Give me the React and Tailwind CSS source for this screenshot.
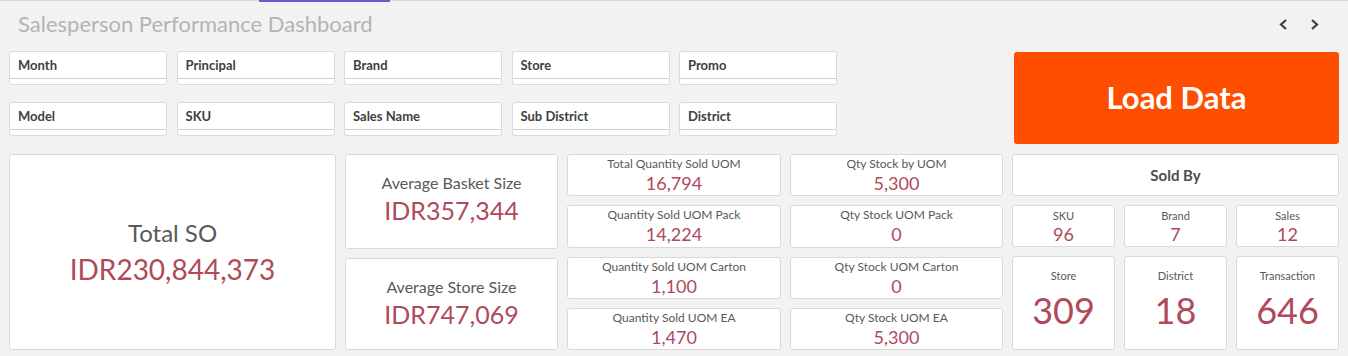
import React from "react";

const FILTERS = [
  ["Month", "Principal", "Brand", "Store", "Promo"],
  ["Model", "SKU", "Sales Name", "Sub District", "District"],
];

const SOLD = [
  ["Total Quantity Sold UOM", "16,794"],
  ["Quantity Sold UOM Pack", "14,224"],
  ["Quantity Sold UOM Carton", "1,100"],
  ["Quantity Sold UOM EA", "1,470"],
];

const STOCK = [
  ["Qty Stock by UOM", "5,300"],
  ["Qty Stock UOM Pack", "0"],
  ["Qty Stock UOM Carton", "0"],
  ["Qty Stock UOM EA", "5,300"],
];

const Card = ({ className = "", children }) => (
  <div
    className={`bg-white border border-[#d9d9d9] rounded-[3px] flex flex-col items-center ${className}`}
  >
    {children}
  </div>
);

const FilterBox = ({ label }) => (
  <div className="h-[34px] bg-white border border-[#dadada] rounded-[3px] flex flex-col">
    <div className="h-[27px] border-b border-[#d2d2d2] flex items-center pl-2 pt-[2px] text-[13px] font-bold text-[#404040]">
      {label}
    </div>
  </div>
);

const Chevron = ({ dir }) => (
  <svg width="9" height="11" viewBox="0 0 9 11" className="text-[#404040]">
    <polyline
      points={dir === "left" ? "7,1 2,5.5 7,10" : "2,1 7,5.5 2,10"}
      fill="none"
      stroke="currentColor"
      strokeWidth="2.2"
    />
  </svg>
);

export default function App() {
  return (
    <div
      className="w-[1348px] h-[356px] bg-[#f2f2f2] overflow-hidden"
      style={{ fontFamily: "Lato, 'Open Sans', sans-serif" }}
    >
      {/* tab strip line */}
      <div className="h-px bg-[#d6d6d6] relative">
        <span className="absolute left-[259px] top-0 w-[131px] h-[2px] bg-[#6a5acd]" />
      </div>

      {/* title */}
      <div className="h-[50px] flex items-center justify-between pl-[18px] pr-[29px] pb-[6px]">
        <h1 className="text-[22px] text-[#b4b4b4]">Salesperson Performance Dashboard</h1>
        <div className="flex items-center gap-[22px] pt-[2px]">
          <Chevron dir="left" />
          <Chevron dir="right" />
        </div>
      </div>

      {/* filters + button */}
      <div className="flex items-start px-[9px]">
        <div className="w-[828px] grid grid-cols-5 gap-x-[9.5px] gap-y-[17px]">
          {FILTERS.flat().map((f) => (
            <FilterBox key={f} label={f} />
          ))}
        </div>
        <button className="ml-auto mt-px w-[325px] h-[92px] rounded-[3px] bg-[#ff4e00] text-white text-[31px] font-bold pb-[2px]">
          Load Data
        </button>
      </div>

      {/* KPI grid */}
      <div className="mt-[10px] px-[9px] h-[196px] grid grid-cols-[327px_213px_214px_213px_1fr] gap-x-[9px]">
        <Card className="justify-center pt-[2px]">
          <div className="text-[24px] text-[#595959] leading-[32px]">Total SO</div>
          <div className="text-[28px] text-[#b04a5a] leading-[40px]">IDR230,844,373</div>
        </Card>

        <div className="flex flex-col gap-[9px]">
          <Card className="flex-1 justify-center pb-[4px]">
            <div className="text-[16px] text-[#595959] leading-[22px]">Average Basket Size</div>
            <div className="text-[25px] text-[#b04a5a] leading-[32px]">IDR357,344</div>
          </Card>
          <Card className="flex-1 justify-center pb-[2px]">
            <div className="text-[16px] text-[#595959] leading-[22px]">Average Store Size</div>
            <div className="text-[25px] text-[#b04a5a] leading-[32px]">IDR747,069</div>
          </Card>
        </div>

        {[SOLD, STOCK].map((col, i) => (
          <div key={i} className="grid grid-rows-4 gap-[9px]">
            {col.map(([label, value]) => (
              <Card key={label} className="pt-[1px]">
                <div className="text-[12px] text-[#595959] leading-[16px]">{label}</div>
                <div className="text-[18px] text-[#b04a5a] leading-[22px]">{value}</div>
              </Card>
            ))}
          </div>
        ))}

        <div className="flex flex-col gap-[9px]">
          <Card className="h-[42px] justify-center">
            <div className="text-[15px] font-bold text-[#4d4d4d]">Sold By</div>
          </Card>
          <div className="h-[42px] grid grid-cols-3 gap-[9px]">
            {[
              ["SKU", "96"],
              ["Brand", "7"],
              ["Sales", "12"],
            ].map(([label, value]) => (
              <Card key={label} className="pt-[2px]">
                <div className="text-[11px] text-[#595959] leading-[15px]">{label}</div>
                <div className="text-[18px] text-[#b04a5a] leading-[22px]">{value}</div>
              </Card>
            ))}
          </div>
          <div className="flex-1 grid grid-cols-3 gap-[9px]">
            {[
              ["Store", "309"],
              ["District", "18"],
              ["Transaction", "646"],
            ].map(([label, value]) => (
              <Card key={label} className="justify-center pb-[8px]">
                <div className="text-[11px] text-[#595959] leading-[15px] mb-[6px]">{label}</div>
                <div className="text-[36px] text-[#b04a5a] leading-[42px]">{value}</div>
              </Card>
            ))}
          </div>
        </div>
      </div>
    </div>
  );
}
